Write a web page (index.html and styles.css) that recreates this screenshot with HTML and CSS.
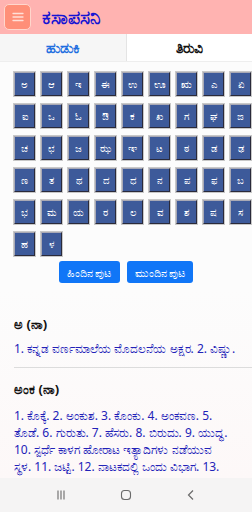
FILE: index.html
```html
<!DOCTYPE html>
<html lang="kn">
<head>
<meta charset="utf-8">
<link rel="stylesheet" href="styles.css">
</head>
<body>
<div class="screen">
  <div class="content">
    <header class="appbar">
      <div class="menu-btn">
        <svg width="12" height="10" viewBox="0 0 12 10"><path d="M1 1.5h10M1 5h10M1 8.5h10" stroke="#ffe0d8" stroke-width="1.3" stroke-linecap="round"/></svg>
      </div>
      <div class="title">ಕಸಾಪಸನಿ</div>
    </header>
    <nav class="tabs">
      <div class="tab tab-search">ಹುಡುಕಿ</div>
      <div class="tab tab-browse">ತಿರುವಿ</div>
    </nav>
    <div class="letters">
      <button class="key">ಅ</button><button class="key">ಆ</button><button class="key">ಇ</button><button class="key">ಈ</button><button class="key">ಉ</button><button class="key">ಊ</button><button class="key">ಋ</button><button class="key">ಎ</button><button class="key">ಏ</button>
      <button class="key">ಐ</button><button class="key">ಒ</button><button class="key">ಓ</button><button class="key">ಔ</button><button class="key">ಕ</button><button class="key">ಖ</button><button class="key">ಗ</button><button class="key">ಘ</button><button class="key">ಙ</button>
      <button class="key">ಚ</button><button class="key">ಛ</button><button class="key">ಜ</button><button class="key">ಝ</button><button class="key">ಞ</button><button class="key">ಟ</button><button class="key">ಠ</button><button class="key">ಡ</button><button class="key">ಢ</button>
      <button class="key">ಣ</button><button class="key">ತ</button><button class="key">ಥ</button><button class="key">ದ</button><button class="key">ಧ</button><button class="key">ನ</button><button class="key">ಪ</button><button class="key">ಫ</button><button class="key">ಬ</button>
      <button class="key">ಭ</button><button class="key">ಮ</button><button class="key">ಯ</button><button class="key">ರ</button><button class="key">ಲ</button><button class="key">ವ</button><button class="key">ಶ</button><button class="key">ಷ</button><button class="key">ಸ</button>
      <button class="key">ಹ</button><button class="key">ಳ</button>
    </div>
    <div class="pager">
      <button class="page-btn">ಹಿಂದಿನ ಪುಟ</button>
      <button class="page-btn">ಮುಂದಿನ ಪುಟ</button>
    </div>
    <section class="entries">
      <article class="entry">
        <h3 class="word">ಅ (ನಾ)</h3>
        <p class="meaning nowrap">1. ಕನ್ನಡ ವರ್ಣಮಾಲೆಯ ಮೊದಲನೆಯ ಅಕ್ಷರ. 2. ವಿಷ್ಣು.</p>
      </article>
      <hr class="sep">
      <article class="entry">
        <h3 class="word">ಅಂಕ (ನಾ)</h3>
        <p class="meaning">1. ಕೊಕ್ಕೆ. 2. ಅಂಕುಶ. 3. ಕೊಂಕು. 4. ಅಂಕವಣ. 5. ತೊಡೆ. 6. ಗುರುತು. 7. ಹೆಸರು. 8. ಬಿರುದು. 9. ಯುದ್ಧ. 10. ಸ್ಪರ್ಧೆ ಕಾಳಗ ಹೋರಾಟ ಇತ್ಯಾದಿಗಳು ನಡೆಯುವ ಸ್ಥಳ. 11. ಜಟ್ಟಿ. 12. ನಾಟಕದಲ್ಲಿ ಒಂದು ವಿಭಾಗ. 13.</p>
      </article>
    </section>
  </div>
  <footer class="sysnav">
    <svg width="12" height="12" viewBox="0 0 12 12"><path d="M3 1.5v9M6 1.5v9M9 1.5v9" stroke="#6a6a6a" stroke-width="1.1"/></svg>
    <svg width="12" height="12" viewBox="0 0 12 12"><rect x="1.5" y="1.5" width="9" height="9" rx="3" fill="none" stroke="#6a6a6a" stroke-width="1.1"/></svg>
    <svg width="12" height="12" viewBox="0 0 12 12"><path d="M8 1.5L3.5 6L8 10.5" fill="none" stroke="#6a6a6a" stroke-width="1.2"/></svg>
  </footer>
</div>
</body>
</html>
```
FILE: styles.css
```css
* { box-sizing: border-box; }
html, body { margin: 0; padding: 0; }
body {
  width: 252px;
  height: 512px;
  overflow: hidden;
  font-family: "Noto Sans", "DejaVu Sans", sans-serif;
  background: #fdfbfb;
}
.screen {
  display: flex;
  flex-direction: column;
  height: 512px;
}
.content {
  flex: 1;
  overflow: hidden;
  background: linear-gradient(#fcfcfc 0, #fcfcfc 290px, #fdf8f8 100%);
}
.appbar {
  height: 34px;
  background: #ffb3b1;
  display: flex;
  align-items: center;
  padding-left: 4px;
  gap: 11px;
}
.menu-btn {
  width: 27px;
  height: 26px;
  border-radius: 5px;
  background: #ff8f78;
  border: 1px solid #ffd6cc;
  display: flex;
  align-items: center;
  justify-content: center;
}
.title {
  color: #1414d4;
  font-weight: 700;
  font-size: 19px;
  line-height: 24px;
}
.tabs {
  display: flex;
  height: 28px;
  border-bottom: 1px solid #eee;
}
.tab {
  flex: 1;
  display: flex;
  align-items: center;
  justify-content: center;
  font-size: 14px;
  font-weight: 700;
}
.tab-search {
  background: #f6f6f6;
  color: #1f6fe0;
}
.tab-browse {
  background: #ffffff;
  color: #111;
  border-left: 1px solid #e4e4e4;
}
.letters {
  display: grid;
  grid-template-columns: repeat(9, 21px);
  grid-auto-rows: 24px;
  column-gap: 6px;
  row-gap: 8px;
  padding: 10px 0 0 14px;
  width: 270px;
}
.key {
  margin: 0;
  padding: 0;
  background: #3d5a9a;
  color: #ffffff;
  font-family: "Noto Sans", "DejaVu Sans", sans-serif;
  font-size: 10px;
  line-height: 1;
  border: 1px solid #2a2a3a;
  border-top-color: #a9a9b5;
  border-left-color: #a9a9b5;
  box-shadow: 0 0 0 1px #c8c8c8;
}
.pager {
  display: flex;
  justify-content: center;
  gap: 7px;
  margin-top: 5px;
}
.page-btn {
  margin: 0;
  height: 22px;
  padding: 0 8px;
  background: #1076f7;
  color: #fff;
  border: none;
  border-radius: 3px;
  font-family: "Noto Sans", "DejaVu Sans", sans-serif;
  font-size: 11px;
  line-height: 1;
}
.entries {
  padding: 32px 0 0 14px;
}
.word {
  margin: 0;
  font-size: 13px;
  line-height: 18px;
  font-weight: 700;
  color: #111;
}
.meaning {
  margin: 7px 0 0;
  color: #2222b8;
  font-size: 12px;
  line-height: 17px;
  padding-right: 24px;
}
.entry + .sep + .entry .meaning { margin-top: 9px; }
.nowrap { white-space: nowrap; }
.sep {
  margin: 10px 0 12px;
  border: none;
  border-top: 1px solid #dcdcdc;
}
.sysnav {
  height: 34px;
  flex: none;
  background: #f5f4f4;
  display: flex;
  justify-content: space-around;
  align-items: center;
  padding: 0 28px;
}
```
